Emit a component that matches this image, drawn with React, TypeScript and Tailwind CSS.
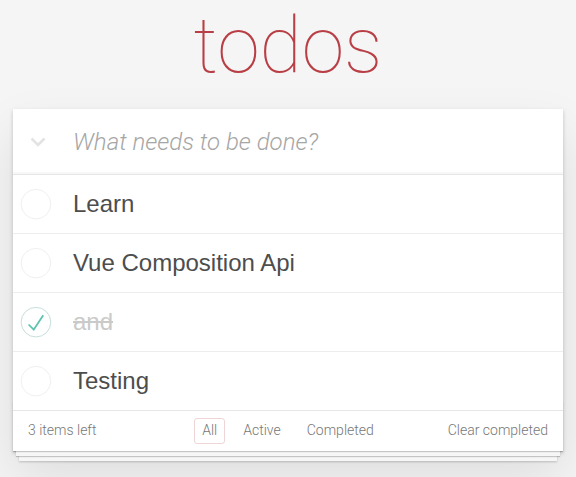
import React from "react";

type Todo = { title: string; done: boolean };

const todos: Todo[] = [
  { title: "Learn", done: false },
  { title: "Vue Composition Api", done: false },
  { title: "and", done: true },
  { title: "Testing", done: false },
];

function CheckCircle({ done }: { done: boolean }) {
  return (
    <svg width="40" height="40" viewBox="-10 -18 100 135" className="shrink-0">
      <circle cx="50" cy="50" r="50" fill="none" stroke={done ? "#bddad5" : "#ededed"} strokeWidth="3" />
      {done && <path fill="#5dc2af" d="M72 25L42 71 27 56l-4 4 20 20 34-52z" />}
    </svg>
  );
}

export default function App() {
  return (
    <div className="min-h-screen bg-[#f5f5f5] font-['Liberation_Sans',Arial,sans-serif]">
      <div className="mx-auto max-w-[550px]">
        <h1 className="h-[109px] pt-[1px] text-center font-['Roboto',sans-serif] text-[77px] font-thin leading-[91px] text-[#b83f45]">
          todos
        </h1>
        <section className="bg-white shadow-[0_2px_4px_0_rgba(0,0,0,0.2),0_25px_50px_0_rgba(0,0,0,0.1)]">
          <header className="flex h-[65px] items-center shadow-[inset_0_-2px_1px_rgba(0,0,0,0.03)]">
            <div className="flex w-[60px] shrink-0 pl-[17px]">
              <svg width="16" height="10" viewBox="0 0 16 10">
                <polyline points="1.5,1.5 8,8 14.5,1.5" fill="none" stroke="#e3e3e3" strokeWidth="2.6" />
              </svg>
            </div>
            <span className="font-['Roboto',sans-serif] text-[24px] font-light italic text-[#a6a6a6]">
              What needs to be done?
            </span>
          </header>
          <ul className="border-t border-[#e6e6e6]">
            {todos.map((t, i) => (
              <li
                key={t.title}
                className={
                  "flex items-center " + (i < todos.length - 1 ? "border-b border-[#ededed]" : "")
                }
              >
                <CheckCircle done={t.done} />
                <span
                  className={
                    "ml-5 py-[15px] text-[24px] leading-[28px] " +
                    (t.done ? "text-[#cacaca] line-through" : "text-[#4d4d4d]")
                  }
                >
                  {t.title}
                </span>
              </li>
            ))}
          </ul>
          <footer className="relative grid h-[41px] grid-cols-[1fr_auto_1fr] items-center border-t border-[#e6e6e6] px-[15px] font-['Roboto',sans-serif] text-[14px] font-light leading-[19.6px] text-[#777] before:pointer-events-none before:absolute before:inset-x-0 before:bottom-0 before:h-[50px] before:content-[''] before:shadow-[0_1px_1px_rgba(0,0,0,0.2),0_8px_0_-3px_#f6f6f6,0_9px_1px_-3px_rgba(0,0,0,0.2),0_16px_0_-6px_#f6f6f6,0_17px_2px_-6px_rgba(0,0,0,0.2)]">
            <span>3 items left</span>
            <ul className="flex gap-[10px]">
              <li className="rounded-[3px] border border-[rgba(175,47,47,0.2)] px-[7px] py-[2px]">All</li>
              <li className="rounded-[3px] border border-transparent px-[7px] py-[2px]">Active</li>
              <li className="rounded-[3px] border border-transparent px-[7px] py-[2px]">Completed</li>
            </ul>
            <span className="justify-self-end">Clear completed</span>
          </footer>
        </section>
      </div>
    </div>
  );
}
